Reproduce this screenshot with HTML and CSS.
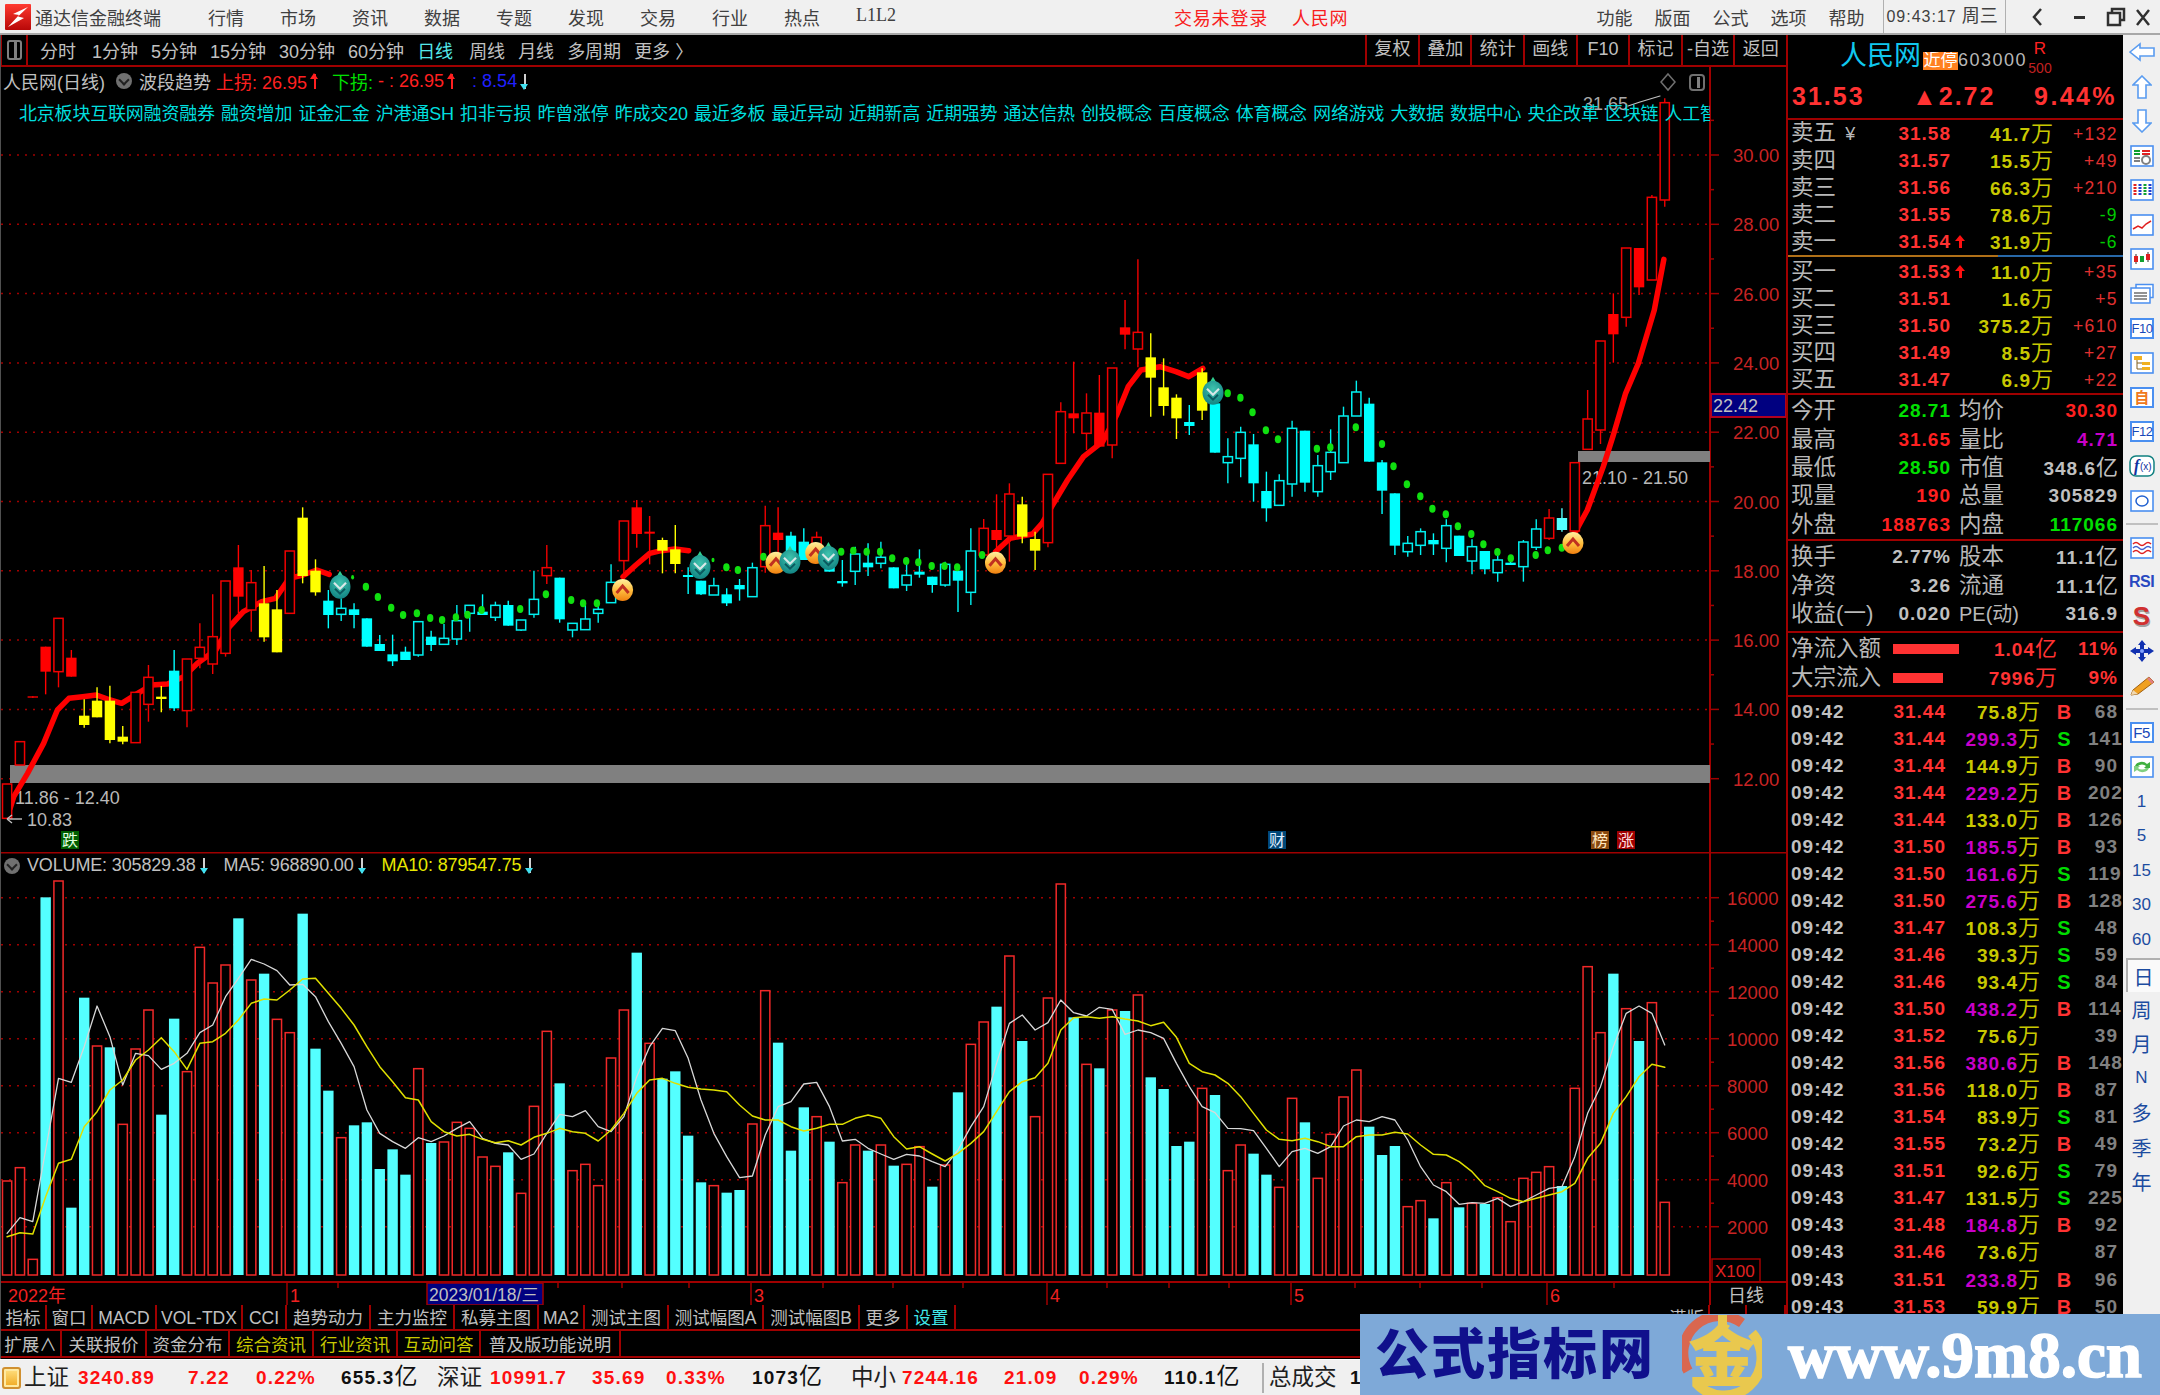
FILE: index.html
```html
<!DOCTYPE html>
<html lang="zh-CN">
<head>
<meta charset="utf-8">
<title>通达信金融终端</title>
<link rel="stylesheet" href="styles.css">
</head>
<body>
<header class="titlebar">
  <svg class="applogo" viewBox="0 0 26 26"><defs><linearGradient id="lg" x1="0" y1="0" x2="0" y2="1"><stop offset="0" stop-color="#ff3a30"/><stop offset="1" stop-color="#b80808"/></linearGradient></defs><rect width="26" height="26" rx="1" fill="url(#lg)"/><path d="M23 3 L8 10 L14 11 L3 23 L19 14 L13 12.5Z" fill="#fff"/></svg>
  <span class="appname">通达信金融终端</span>
  <nav class="menu"><span>行情</span><span>市场</span><span>资讯</span><span>数据</span><span>专题</span><span>发现</span><span>交易</span><span>行业</span><span>热点</span><span class="serif">L1L2</span></nav>
  <span class="alert">交易未登录</span><span class="alert second">人民网</span>
  <nav class="menu menu-right"><span>功能</span><span>版面</span><span>公式</span><span>选项</span><span>帮助</span></nav>
  <span class="clock"><b>09:43:17</b> 周三</span>
  <span class="winbtns"><svg viewBox="0 0 130 24"><path d="M17 4 L10 12 L17 20" fill="none" stroke="#303030" stroke-width="2.5"/><rect x="50" y="11" width="11" height="3" fill="#303030"/><rect x="84" y="8" width="12" height="12" fill="none" stroke="#303030" stroke-width="2.5"/><path d="M88 8V4H100V15H96" fill="none" stroke="#303030" stroke-width="2.5"/><path d="M126 5 L138 20 M138 5 L126 20" stroke="#303030" stroke-width="2.5" transform="translate(-13 0)"/></svg></span>
</header>

<div class="work">
  <main class="left">
    <div class="chart-toolbar">
      <span class="pane-btn"><i></i></span>
      <span class="tb tb-first">分时</span><span class="tb">1分钟</span><span class="tb">5分钟</span><span class="tb">15分钟</span><span class="tb">30分钟</span><span class="tb">60分钟</span><span class="tb tb-on">日线</span><span class="tb">周线</span><span class="tb">月线</span><span class="tb">多周期</span><span class="tb">更多 〉</span>
      <div class="tb-cells"><span>复权</span><span>叠加</span><span>统计</span><span>画线</span><span>F10</span><span>标记</span><span>-自选</span><span>返回</span></div>
    </div>

    <section class="chart-main">
      <svg id="main-chart" class="chart-svg" viewBox="0 67 1786 785" width="1786" height="785"></svg>
      <div class="legend">
        <span class="gray">人民网(日线)</span><span class="dot-btn"></span><span class="gray">波段趋势</span>
        <span class="red l-up">上拐: 26.95</span><span class="arrow-up"></span>
        <span class="green l-dn">下拐:</span><span class="red">&nbsp;- : 26.95</span><span class="arrow-up"></span>
        <span class="blue l-last">: 8.54</span><span class="arrow-dn"></span>
      </div>
      <div class="concepts"><span>北京板块互联网融资融券</span><span>融资增加</span><span>证金汇金</span><span>沪港通SH</span><span>扣非亏损</span><span>昨曾涨停</span><span>昨成交20</span><span>最近多板</span><span>最近异动</span><span>近期新高</span><span>近期强势</span><span>通达信热</span><span>创投概念</span><span>百度概念</span><span>体育概念</span><span>网络游戏</span><span>大数据</span><span>数据中心</span><span>央企改革</span><span>区块链</span><span>人工智能</span></div>
    </section>

    <section class="chart-vol">
      <svg id="vol-chart" class="chart-svg" viewBox="0 852 1786 453" width="1786" height="453"></svg>
      <div class="vol-legend">
        <span class="dot-btn"></span><span class="gray">VOLUME: 305829.38</span><span class="arrow-dn"></span>
        <span class="gray vl-gap">MA5: 968890.00</span><span class="arrow-dn"></span>
        <span class="yellow vl-gap">MA10: 879547.75</span><span class="arrow-dn"></span>
      </div>
    </section>

    <div class="tabs tabs-a">
      <span>指标</span><span>窗口</span><span>MACD</span><span>VOL-TDX</span><span>CCI</span><span>趋势动力</span><span>主力监控</span><span>私募主图</span><span>MA2</span><span>测试主图</span><span>测试幅图A</span><span>测试幅图B</span><span>更多</span><span class="cyan">设置</span><span class="filler"></span><span>满版</span><span></span><span></span>
    </div>
    <div class="tabs tabs-b">
      <span>扩展∧</span><span>关联报价</span><span>资金分布</span><span class="olive">综合资讯</span><span class="olive">行业资讯</span><span class="olive">互动问答</span><span>普及版功能说明</span><span class="filler"></span>
    </div>
  </main>

  <aside class="side">
    <div class="side-head">
      <div class="stock">
        <span class="stock-name">人民网</span><span class="stock-tag">近停</span><span class="stock-code">603000</span>
        <span class="stock-r"><b>R</b><small>500</small></span>
      </div>
      <div class="stock-price"><span>31.53</span><span>▲2.72</span><span class="pct">9.44%</span></div>
    </div>

    <div class="book">
      <div class="q"><span class="lb">卖五 <em>¥</em></span><span class="pr">31.58</span><span class="ar"></span><span class="vl">41.7<i>万</i></span><span class="dl">+132</span></div>
      <div class="q"><span class="lb">卖四</span><span class="pr">31.57</span><span class="ar"></span><span class="vl">15.5<i>万</i></span><span class="dl">+49</span></div>
      <div class="q"><span class="lb">卖三</span><span class="pr">31.56</span><span class="ar"></span><span class="vl">66.3<i>万</i></span><span class="dl">+210</span></div>
      <div class="q"><span class="lb">卖二</span><span class="pr">31.55</span><span class="ar"></span><span class="vl">78.6<i>万</i></span><span class="dl neg">-9</span></div>
      <div class="q"><span class="lb">卖一</span><span class="pr">31.54</span><span class="ar"><span class="tick-up"></span></span><span class="vl">31.9<i>万</i></span><span class="dl neg">-6</span></div>
    </div>
    <div class="two-tone"></div>
    <div class="book book-buy">
      <div class="q"><span class="lb">买一</span><span class="pr">31.53</span><span class="ar"><span class="tick-up"></span></span><span class="vl">11.0<i>万</i></span><span class="dl">+35</span></div>
      <div class="q"><span class="lb">买二</span><span class="pr">31.51</span><span class="ar"></span><span class="vl">1.6<i>万</i></span><span class="dl">+5</span></div>
      <div class="q"><span class="lb">买三</span><span class="pr">31.50</span><span class="ar"></span><span class="vl">375.2<i>万</i></span><span class="dl">+610</span></div>
      <div class="q"><span class="lb">买四</span><span class="pr">31.49</span><span class="ar"></span><span class="vl">8.5<i>万</i></span><span class="dl">+27</span></div>
      <div class="q"><span class="lb">买五</span><span class="pr">31.47</span><span class="ar"></span><span class="vl">6.9<i>万</i></span><span class="dl">+22</span></div>
    </div>

    <div class="info">
      <div class="r"><span class="lb">今开</span><span class="val green">28.71</span><span class="lb2">均价</span><span class="val red">30.30</span></div>
      <div class="r"><span class="lb">最高</span><span class="val red">31.65</span><span class="lb2">量比</span><span class="val magenta">4.71</span></div>
      <div class="r"><span class="lb">最低</span><span class="val green">28.50</span><span class="lb2">市值</span><span class="val gray">348.6<i>亿</i></span></div>
      <div class="r"><span class="lb">现量</span><span class="val red">190</span><span class="lb2">总量</span><span class="val gray">305829</span></div>
      <div class="r"><span class="lb">外盘</span><span class="val red">188763</span><span class="lb2">内盘</span><span class="val green">117066</span></div>
    </div>
    <div class="info info-b">
      <div class="r"><span class="lb">换手</span><span class="val gray">2.77%</span><span class="lb2">股本</span><span class="val gray">11.1<i>亿</i></span></div>
      <div class="r"><span class="lb">净资</span><span class="val gray">3.26</span><span class="lb2">流通</span><span class="val gray">11.1<i>亿</i></span></div>
      <div class="r"><span class="lb">收益(一)</span><span class="val gray">0.020</span><span class="lb2 pe">PE(动)</span><span class="val gray">316.9</span></div>
    </div>
    <div class="flows">
      <div class="f"><span class="lb">净流入额</span><span class="amt"><b class="bar bar-a"></b><span>1.04<i>亿</i></span></span><span class="fp">11%</span></div>
      <div class="f"><span class="lb">大宗流入</span><span class="amt"><b class="bar bar-b"></b><span>7996<i>万</i></span></span><span class="fp">9%</span></div>
    </div>

    <div class="ticks">
      <div class="t"><span class="tm">09:42</span><span class="tp">31.44</span><span class="tv">75.8<i>万</i></span><span class="ts buy">B</span><span class="tn">68</span></div>
      <div class="t"><span class="tm">09:42</span><span class="tp">31.44</span><span class="tv big">299.3<i>万</i></span><span class="ts sell">S</span><span class="tn">141</span></div>
      <div class="t"><span class="tm">09:42</span><span class="tp">31.44</span><span class="tv">144.9<i>万</i></span><span class="ts buy">B</span><span class="tn">90</span></div>
      <div class="t"><span class="tm">09:42</span><span class="tp">31.44</span><span class="tv big">229.2<i>万</i></span><span class="ts buy">B</span><span class="tn">202</span></div>
      <div class="t"><span class="tm">09:42</span><span class="tp">31.44</span><span class="tv">133.0<i>万</i></span><span class="ts buy">B</span><span class="tn">126</span></div>
      <div class="t"><span class="tm">09:42</span><span class="tp">31.50</span><span class="tv big">185.5<i>万</i></span><span class="ts buy">B</span><span class="tn">93</span></div>
      <div class="t"><span class="tm">09:42</span><span class="tp">31.50</span><span class="tv big">161.6<i>万</i></span><span class="ts sell">S</span><span class="tn">119</span></div>
      <div class="t"><span class="tm">09:42</span><span class="tp">31.50</span><span class="tv big">275.6<i>万</i></span><span class="ts buy">B</span><span class="tn">128</span></div>
      <div class="t"><span class="tm">09:42</span><span class="tp">31.47</span><span class="tv">108.3<i>万</i></span><span class="ts sell">S</span><span class="tn">48</span></div>
      <div class="t"><span class="tm">09:42</span><span class="tp">31.46</span><span class="tv">39.3<i>万</i></span><span class="ts sell">S</span><span class="tn">59</span></div>
      <div class="t"><span class="tm">09:42</span><span class="tp">31.46</span><span class="tv">93.4<i>万</i></span><span class="ts sell">S</span><span class="tn">84</span></div>
      <div class="t"><span class="tm">09:42</span><span class="tp">31.50</span><span class="tv big">438.2<i>万</i></span><span class="ts buy">B</span><span class="tn">114</span></div>
      <div class="t"><span class="tm">09:42</span><span class="tp">31.52</span><span class="tv">75.6<i>万</i></span><span class="ts"></span><span class="tn">39</span></div>
      <div class="t"><span class="tm">09:42</span><span class="tp">31.56</span><span class="tv big">380.6<i>万</i></span><span class="ts buy">B</span><span class="tn">148</span></div>
      <div class="t"><span class="tm">09:42</span><span class="tp">31.56</span><span class="tv">118.0<i>万</i></span><span class="ts buy">B</span><span class="tn">87</span></div>
      <div class="t"><span class="tm">09:42</span><span class="tp">31.54</span><span class="tv">83.9<i>万</i></span><span class="ts sell">S</span><span class="tn">81</span></div>
      <div class="t"><span class="tm">09:42</span><span class="tp">31.55</span><span class="tv">73.2<i>万</i></span><span class="ts buy">B</span><span class="tn">49</span></div>
      <div class="t"><span class="tm">09:43</span><span class="tp">31.51</span><span class="tv">92.6<i>万</i></span><span class="ts sell">S</span><span class="tn">79</span></div>
      <div class="t"><span class="tm">09:43</span><span class="tp">31.47</span><span class="tv">131.5<i>万</i></span><span class="ts sell">S</span><span class="tn">225</span></div>
      <div class="t"><span class="tm">09:43</span><span class="tp">31.48</span><span class="tv big">184.8<i>万</i></span><span class="ts buy">B</span><span class="tn">92</span></div>
      <div class="t"><span class="tm">09:43</span><span class="tp">31.46</span><span class="tv">73.6<i>万</i></span><span class="ts"></span><span class="tn">87</span></div>
      <div class="t"><span class="tm">09:43</span><span class="tp">31.51</span><span class="tv big">233.8<i>万</i></span><span class="ts buy">B</span><span class="tn">96</span></div>
      <div class="t"><span class="tm">09:43</span><span class="tp">31.53</span><span class="tv">59.9<i>万</i></span><span class="ts buy">B</span><span class="tn">50</span></div>
    </div>
  </aside>

  <aside class="strip">
    <span class="ti"><svg width="26" height="20" viewBox="0 0 26 20"><path d="M1 10 L11 2 V6 H25 V14 H11 V18Z" class="arrow-ico"/></svg></span>
    <span class="ti"><svg width="20" height="24" viewBox="0 0 20 24"><path d="M10 1 L19 10 H14 V23 H6 V10 H1Z" class="arrow-ico"/></svg></span>
    <span class="ti"><svg width="20" height="24" viewBox="0 0 20 24"><path d="M10 23 L19 14 H14 V1 H6 V14 H1Z" class="arrow-ico"/></svg></span>
    <span class="ti"><svg width="24" height="22" viewBox="0 0 24 22"><rect class="frame" x="1" y="1" width="22" height="20"/><path d="M4 6H10M4 9H10" stroke="#10a030" stroke-width="2"/><path d="M12 6H20M12 9H20" stroke="#e02020" stroke-width="2"/><path d="M4 13H10M4 16H10" stroke="#808080" stroke-width="2"/><circle cx="16" cy="15" r="4" fill="#fff" stroke="#808080" stroke-width="2"/></svg></span>
    <span class="ti"><svg width="24" height="22" viewBox="0 0 24 22"><rect class="frame" x="1" y="1" width="22" height="20"/><path d="M5 5V17" stroke="#e02020" stroke-width="3" stroke-dasharray="2 1"/><path d="M10 5V17" stroke="#2040d0" stroke-width="3" stroke-dasharray="2 1"/><path d="M15 5V17" stroke="#10a030" stroke-width="3" stroke-dasharray="2 1"/><path d="M20 5V17" stroke="#2040d0" stroke-width="3" stroke-dasharray="2 1"/></svg></span>
    <span class="ti"><svg width="24" height="22" viewBox="0 0 24 22"><rect class="frame" x="1" y="1" width="22" height="20"/><path d="M3 15 L8 12 L12 14 L16 10 L21 7" fill="none" stroke="#e02020" stroke-width="1.5"/></svg></span>
    <span class="ti"><svg width="24" height="22" viewBox="0 0 24 22"><rect class="frame" x="1" y="1" width="22" height="20"/><path d="M6 6V16M18 4V14" stroke="#303030"/><rect x="4" y="8" width="4" height="6" fill="#e02020"/><rect x="10" y="8" width="4" height="6" fill="#10a030"/><rect x="16" y="6" width="4" height="6" fill="#e02020"/></svg></span>
    <span class="ti"><svg width="24" height="22" viewBox="0 0 24 22"><rect x="6" y="1.5" width="17" height="13" fill="#fff" stroke="#4a8ff0" stroke-width="1.5"/><rect x="1" y="5" width="19" height="15" fill="#fff" stroke="#4a8ff0" stroke-width="1.5"/><path d="M4 10H17M4 13H17M4 16H17" stroke="#707070" stroke-width="1.5"/></svg></span>
    <span class="ti"><b class="fkey">F10</b></span>
    <span class="ti"><svg width="24" height="22" viewBox="0 0 24 22"><rect class="frame" x="1" y="1" width="22" height="20"/><rect x="4" y="4" width="8" height="4" fill="#f0b020"/><rect x="12" y="10" width="8" height="3" fill="#f0b020"/><rect x="12" y="15" width="8" height="3" fill="#f0b020"/><path d="M7 8V17H12M7 11H12" fill="none" stroke="#806020"/></svg></span>
    <span class="ti"><b class="fkey fkey-zi">自</b></span>
    <span class="ti"><b class="fkey">F12</b></span>
    <span class="ti"><svg width="26" height="22" viewBox="0 0 26 22"><rect x="1" y="1" width="24" height="20" rx="6" fill="#fff" stroke="#108080" stroke-width="1.5"/><text x="5" y="16" class="fx">f</text><text x="11" y="15" class="fx2">(x)</text></svg></span>
    <span class="ti"><svg width="24" height="22" viewBox="0 0 24 22"><rect class="frame" x="1" y="1" width="22" height="20"/><ellipse cx="12" cy="11" rx="6" ry="5" fill="none" stroke="#2060d0" stroke-width="1.5"/></svg></span>
    <span class="tsep"></span>
    <span class="ti"><svg width="24" height="22" viewBox="0 0 24 22"><rect class="frame" x="1" y="1" width="22" height="20"/><path d="M3 7 Q6 4 9 7 T15 7 T21 7" fill="none" stroke="#e02020" stroke-width="1.5"/><path d="M3 11 Q6 8 9 11 T15 11 T21 11" fill="none" stroke="#4060d0" stroke-width="1.5"/><path d="M3 15 Q6 12 9 15 T15 15 T21 15" fill="none" stroke="#e02020" stroke-width="1.5"/></svg></span>
    <span class="ti rsi">RSI</span>
    <span class="ti rsi-s">S</span>
    <span class="ti"><svg width="26" height="22" viewBox="0 0 26 22"><path d="M13 0 L17 5 H15 V9 H19 V7 L25 11 L19 15 V13 H15 V17 H17 L13 22 L9 17 H11 V13 H7 V15 L1 11 L7 7 V9 H11 V5 H9Z" fill="#1030b0"/><circle cx="13" cy="11" r="2" fill="#80a0ff"/></svg></span>
    <span class="ti"><svg width="28" height="24" viewBox="0 0 28 24"><path d="M3 21 L5 16 L21 3 L26 8 L10 20Z" fill="#f0a020" stroke="#a06010"/><path d="M3 21 L5 16 L10 20Z" fill="#f0d8b0"/><path d="M21 3 L26 8 L24 10 L19 5Z" fill="#e08080"/></svg></span>
    <span class="tsep"></span>
    <span class="ti"><b class="fkey fkey-f5">F5</b></span>
    <span class="ti"><svg width="24" height="22" viewBox="0 0 24 22"><rect class="frame" x="1" y="1" width="22" height="20"/><path d="M5 10 A7 6 0 0 1 17 8 L20 6 V12 H14 L16 10 A5 4 0 0 0 8 10Z" fill="#40b040"/><path d="M19 12 A7 6 0 0 1 7 14 L4 16 V10 H10 L8 12 A5 4 0 0 0 16 12Z" fill="#80d080"/></svg></span>
    <span class="ti tx">1</span><span class="ti tx">5</span><span class="ti tx">15</span><span class="ti tx">30</span><span class="ti tx">60</span>
    <span class="ti cn cn-on">日</span><span class="ti cn">周</span><span class="ti cn">月</span><span class="ti tx">N</span><span class="ti cn">多</span><span class="ti cn">季</span><span class="ti cn">年</span>
  </aside>
</div>

<footer class="status">
  <span class="st-ico"></span>
  <span class="nm">上证</span><span class="rd">3240.89</span><span class="rd">7.22</span><span class="rd">0.22%</span><span class="bk">655.3<i>亿</i></span>
  <span class="nm">深证</span><span class="rd">10991.7</span><span class="rd">35.69</span><span class="rd">0.33%</span><span class="bk">1073<i>亿</i></span>
  <span class="nm">中小</span><span class="rd">7244.16</span><span class="rd">21.09</span><span class="rd">0.29%</span><span class="bk">110.1<i>亿</i></span>
  <span class="nm nm-last">总成交</span><span class="bk bk-last">1272<i>亿</i></span>
</footer>

<div class="watermark">
  <span class="wm-title">公式指标网</span>
  <svg class="wm-logo" viewBox="0 0 80 80"><path d="M6 56 A37 37 0 0 1 60 8" fill="none" stroke="#d9674f" stroke-width="10"/><path d="M70 18 A37 37 0 0 1 14 68" fill="none" stroke="#e9c84e" stroke-width="10"/><rect x="36" y="0" width="9" height="14" fill="#e9c84e"/><text x="40" y="66" class="wm-glyph">金</text></svg>
  <span class="wm-url">www.9m8.cn</span>
</div>

<script src="chart.js"></script>
</body>
</html>
```
FILE: styles.css
```css
* { box-sizing: border-box; }
html, body { margin: 0; padding: 0; }
body {
  width: 2160px; height: 1395px; overflow: hidden; position: relative;
  background: #000; color: #c0c0c0;
  font-family: "Liberation Sans", "Noto Sans CJK SC", sans-serif; font-size: 18px;
}
i, em { font-style: normal; }

/* title bar */
.titlebar { height: 35px; display: flex; align-items: center; background: #f0f0f0; border-bottom: 2px solid #a8a8a8; color: #404040; }
.applogo { width: 26px; height: 26px; margin-left: 5px; flex: none; }
.appname { margin-left: 4px; width: 126px; white-space: nowrap; }
.menu { display: flex; gap: 36px; margin-left: 47px; }
.menu span { white-space: nowrap; }
.serif { font-family: "Liberation Serif", serif; margin-top: 1px; width: 36px; }
.alert { color: #f82020; margin-left: 282px; letter-spacing: .8px; white-space: nowrap; }
.alert.second { margin-left: 24px; }
.menu-right { margin-left: 248px; gap: 22px; }
.clock { margin-left: 19px; width: 123px; height: 33px; line-height: 32px; padding-left: 2px; border-left: 1px solid #b0b0b0; border-right: 1px solid #b0b0b0; font-size: 18px; white-space: nowrap; }
.clock b { font-weight: normal; font-size: 16px; letter-spacing: 1px; }
.winbtns { margin-left: 18px; }
.winbtns svg { width: 130px; height: 24px; display: block; }

.work { display: flex; height: 1324px; }
.left { width: 1786px; flex: none; display: flex; flex-direction: column; border-left: 1px solid #505050; margin-left: 0; }

/* chart toolbar */
.chart-toolbar { height: 32px; flex: none; display: flex; align-items: center; border-bottom: 2px solid #a00000; white-space: nowrap; }
.pane-btn { width: 27px; height: 30px; border-right: 2px solid #a00000; border-left: 1px solid #a00000; display: flex; align-items: center; justify-content: center; }
.pane-btn i { width: 15px; height: 20px; border: 2px solid #808080; border-radius: 3px; background: linear-gradient(to right, #000 0 5px, #808080 5px 8px, #000 8px); }
.tb { margin-right: 13px; }
.tb-first { margin-left: 12px; margin-right: 16px; }
.tb-on { color: #54e8e8; margin-right: 16px; }
.tb-cells { margin-left: auto; display: flex; height: 30px; }
.tb-cells span { width: 52.6px; border-left: 2px solid #a00000; text-align: center; line-height: 29px; }

/* charts */
.chart-main { height: 785px; flex: none; position: relative; overflow: hidden; }
.chart-vol { height: 453px; flex: none; position: relative; overflow: hidden; }
.chart-svg { position: absolute; left: -1px; top: 0; display: block; }
.chart-svg text { font-family: "Liberation Sans", "Noto Sans CJK SC", sans-serif; }
.legend { position: relative; display: flex; align-items: center; height: 20px; margin-top: 4px; margin-left: 2px; white-space: nowrap; }
.gray { color: #c0c0c0; }
.red { color: #ff2020; }
.green { color: #00e000; }
.blue { color: #2020ff; }
.yellow { color: #e8e800; }
.magenta { color: #c800c8; }
.cyan { color: #40e8e8; }
.olive { color: #c8c800; }
.dot-btn { width: 16px; height: 16px; flex: none; border-radius: 50%; background: #707070; margin: 0 7px 0 11px; position: relative; }
.dot-btn::after { content: ""; position: absolute; left: 4px; top: 3px; width: 6px; height: 6px; border-right: 2px solid #222; border-bottom: 2px solid #222; transform: rotate(45deg); }
.l-up { margin-left: 5px; }
.l-dn { margin-left: 13px; }
.l-last { margin-left: 16px; }
.arrow-up, .arrow-dn { display: inline-block; width: 9px; height: 17px; margin-left: 3px; flex: none; position: relative; }
.arrow-up::before, .arrow-dn::before { content: ""; position: absolute; left: 3.5px; width: 2px; top: 1px; bottom: 1px; background: #ff2020; }
.arrow-up::after, .arrow-dn::after { content: ""; position: absolute; left: 0; width: 0; height: 0; border-left: 4.5px solid transparent; border-right: 4.5px solid transparent; }
.arrow-up::after { top: 0; border-bottom: 6px solid #ff2020; }
.arrow-dn::before { background: #d0d0d0; }
.arrow-dn::after { bottom: 0; border-top: 6px solid #40e0f0; }
.concepts { position: relative; display: flex; gap: 6.2px; width: 1709px; overflow: hidden; padding-left: 18px; margin-top: 12px; height: 22px; line-height: 22px; color: #00dede; white-space: nowrap; letter-spacing: -.2px; }
.concepts span { flex: none; }
.vol-legend { position: relative; display: flex; align-items: center; height: 24px; white-space: nowrap; letter-spacing: -.15px; padding-top: 3px; }
.vol-legend .dot-btn { margin: 0 7px 0 3px; }
.vl-gap { margin-left: 15px; }
.vol-legend .arrow-dn { margin-left: 4px; }

/* bottom tabs */
.tabs { display: grid; flex: none; border-bottom: 2px solid #a00000; white-space: nowrap; }
.tabs > span { border-right: 2px solid #a00000; text-align: center; overflow: hidden; }
.tabs-a { height: 26px; line-height: 27px; grid-template-columns: 46px 46px 64px 86px 44px 84px 84px 84px 46px 84px 95px 96px 48px 48px 709px 45px 37px 39px; font-size: 17.5px; }
.tabs-b { height: 27px; line-height: 29px; grid-template-columns: 61px 85px 83px 84px 84px 83px 140px 1fr; font-size: 17.5px; }
.tabs > .filler { border-right: 0; }

/* quote panel */
.side { width: 337px; flex: none; border-left: 2px solid #a00000; overflow: hidden; }
.side-head { height: 85px; border-bottom: 2px solid #a00000; padding-top: 7px; }
.stock { display: flex; height: 28px; margin-left: 52px; white-space: nowrap; }
.stock-name { color: #10c8ee; font-size: 27px; line-height: 28px; width: 83px; }
.stock-tag { background: #ff8020; color: #fff; width: 35px; height: 18px; margin-top: 10px; font-size: 17px; line-height: 18px; text-align: center; overflow: hidden; }
.stock-code { color: #b8b8b8; font-size: 18px; letter-spacing: 1.5px; margin-top: 9px; line-height: 18px; width: 74px; }
.stock-r { display: flex; flex-direction: column; align-items: center; color: #ff2020; font-size: 17px; line-height: 14px; width: 16px; }
.stock-r b { font-weight: normal; }
.stock-r small { color: #c02020; font-size: 14px; margin-top: 5px; }
.stock-price { display: grid; grid-template-columns: 120px 1fr auto; margin: 14px 6px 0 4px; font-weight: bold; font-size: 25px; line-height: 25px; letter-spacing: 2px; color: #ff3232; white-space: nowrap; }
.stock-price .pct { letter-spacing: 2.4px; }

.lb { font-size: 22.5px; line-height: 24px; white-space: nowrap; color: #b8b8b8; }
.lb em { font-size: 18px; margin-left: 3px; }
.q, .r, .f, .t { display: grid; align-items: center; padding: 0 5px 0 3px; white-space: nowrap; font-weight: bold; font-size: 19px; line-height: 20px; letter-spacing: 1px; }
.q .lb, .r .lb, .f .lb, .r .lb2 { font-weight: normal; letter-spacing: 0; }
.book { height: 135px; }
.q { height: 27px; grid-template-columns: 89px 71px 18px 84px 65px; }
.book-buy { height: 138px; border-bottom: 2px solid #a00000; padding-top: 1px; }
.pr { color: #ff3232; text-align: right; }
.ar { display: flex; justify-content: center; }
.tick-up { width: 11px; height: 13px; position: relative; display: block; }
.tick-up::before { content: ""; position: absolute; left: 4px; top: 4px; bottom: 0; width: 3px; background: #ff1010; }
.tick-up::after { content: ""; position: absolute; left: 0; top: 0; border-left: 5.5px solid transparent; border-right: 5.5px solid transparent; border-bottom: 6px solid #ff1010; }
.vl { color: #c8c800; text-align: right; }
.vl i, .tv i { font-weight: normal; font-size: 22px; line-height: 1; letter-spacing: 0; color: #c8c800; }
.dl { color: #e03030; text-align: right; font-weight: normal; font-size: 17.5px; letter-spacing: 1.4px; }
.dl.neg { color: #00c800; }
.two-tone { height: 2px; background: linear-gradient(to right, #b07018 0 210px, #2868a8 210px); }

.info { height: 146px; border-bottom: 2px solid #a00000; padding-top: 2px; }
.r { height: 28.4px; grid-template-columns: 89px 71px 64px 103px; }
.r .val { text-align: right; }
.r .val i, .amt i { font-weight: normal; font-size: 22px; line-height: 1; letter-spacing: 0; }
.lb2 { font-size: 22.5px; line-height: 24px; padding-left: 8px; color: #b8b8b8; }
.lb2.pe { font-size: 20px; }
.info-b { height: 92px; }
.flows { height: 64px; border-bottom: 2px solid #a00000; padding-top: 2px; }
.f { height: 28.5px; grid-template-columns: 102px 164px 61px; color: #ff3232; }
.amt { display: flex; align-items: center; justify-content: space-between; }
.bar { display: block; height: 10px; background: #ff3232; }
.bar-a { width: 66px; }
.bar-b { width: 50px; }
.fp { text-align: right; }

.ticks { padding-top: 1px; }
.t { height: 27.05px; grid-template-columns: 155px 94px 48px 30px; position: relative; }
.t .tm { grid-column: 1; grid-row: 1; color: #c0c0c0; }
.t .tp { grid-column: 1; grid-row: 1; color: #ff3232; text-align: right; }
.tv { color: #c8c800; text-align: right; }
.tv.big { color: #c800c8; }
.ts { text-align: center; font-size: 20px; letter-spacing: 0; }
.ts.buy { color: #ff3232; }
.ts.sell { color: #00dc00; }
.tn { text-align: right; color: #808080; }

/* tool strip */
.strip { flex: 1; background: #f0f0f0; display: flex; flex-direction: column; align-items: center; overflow: hidden; }
.ti { height: 34.5px; flex: none; display: flex; align-items: center; justify-content: center; width: 100%; }
.tsep { width: 32px; height: 12.5px; flex: none; position: relative; }
.tsep::after { content: ""; position: absolute; left: 0; right: 0; top: 5px; height: 2px; background: #c0c0c0; }
.arrow-ico { fill: #fff; stroke: #5a9cf0; stroke-width: 1.6; }
.frame { fill: #fff; stroke: #4a8ff0; stroke-width: 1.6; }
.fkey { display: block; width: 24px; height: 21px; border: 2px solid #4a8ff0; background: #fff; color: #1848b8; font-size: 13px; line-height: 17px; text-align: center; font-weight: normal; letter-spacing: -.5px; white-space: nowrap; }
.fkey-zi { color: #f07820; font-size: 15px; font-weight: bold; }
.fkey-f5 { font-size: 15px; }
.fx { font: italic bold 16px "Liberation Serif", serif; fill: #1030a0; }
.fx2 { font: 10px "Liberation Sans", sans-serif; fill: #1030a0; }
.rsi { color: #2848c0; font-weight: bold; font-size: 16px; letter-spacing: -.5px; }
.rsi-s { color: #d03030; font-weight: bold; font-size: 26px; text-shadow: 1px 2px 0 #a0a0a0; }
.tx { color: #1c4ca0; font-size: 17px; }
.cn { color: #1c4ca0; font-size: 20px; }
.cn-on { width: 34px; height: 34px; background: #fafafa; border-top: 2px solid #b0b0b0; border-left: 2px solid #b0b0b0; margin-left: 2px; margin-top: 1px; }

/* status bar */
.status { height: 36px; display: grid; grid-template-columns: 24px 54px 110px 68px 85px 96px 53px 102px 74px 86px 99px 51px 102px 75px 85px 98px 88px 100px; align-items: center; background: #f0f0f0; border-top: 1px solid #fff; white-space: nowrap; font-weight: bold; font-size: 19px; line-height: 24px; letter-spacing: 1.2px; }
.st-ico { width: 19px; height: 22px; margin-left: 2px; background: linear-gradient(#ffe080, #f0a820); border: 2px solid #d09030; border-radius: 3px; box-shadow: inset 0 0 0 2px #ffe9a0; }
.nm { color: #202020; font-weight: normal; font-size: 22.5px; letter-spacing: 0; }
.rd { color: #ff1010; }
.bk { color: #101010; }
.bk i { font-weight: normal; font-size: 23px; line-height: 1; letter-spacing: 0; }
.nm-last { border-left: 2px solid #b0b0b0; padding-left: 5px; height: 30px; line-height: 30px; }
.bk-last { margin-left: 0; }

/* site watermark over the bottom right corner */
.watermark { position: absolute; left: 1360px; top: 1314px; right: 0; bottom: 0; background: #7ea9d8; display: flex; align-items: center; }
.wm-title { margin-left: 15px; width: 305px; font-size: 54px; line-height: 60px; font-weight: 900; letter-spacing: 2px; color: #10108c; white-space: nowrap; }
.wm-logo { width: 80px; height: 80px; flex: none; margin-left: 2px; }
.wm-glyph { font-size: 68px; font-weight: 900; fill: #e9c84e; text-anchor: middle; font-family: "Noto Sans CJK SC", sans-serif; }
.wm-url { margin-left: 26px; font-family: "Liberation Serif", serif; font-weight: bold; font-size: 65px; line-height: 66px; color: #fff; -webkit-text-stroke: 1.6px #fff; white-space: nowrap; }
```
FILE: chart.js
```js
// Daily candle and volume data, given in screen pixels of the price and volume scales.
const X = i => 7.1 + 12.85 * i;
const priceY = p => 155 + (30 - p) * 34.65;
const AXIS = 1710;
const DARK = '#a00000';

const seg = (off, rows) => rows.map(r => ({ t: r[0], top: off + r[1] / 3, bot: off + r[2] / 3, hi: r[3] ? off + r[3] / 3 : 0, lo: r[4] ? off + r[4] / 3 : 0 }));

const candles = [
  ...seg(480, [
    ['r',912,1015],['r',785,855],['R',649,653],['R',500,575,0,643],['r',415,575,0,622],['R',533,590,510,0],
    ['y',707,735,658,743],['y',662,712,622,0],['y',662,780,617,790],['y',770,785,738,793],['r',637,788],
    ['r',592,673,555,725],['y',650,657,618,697],['C',572,685,510,693],['r',537,692,0,742],['r',502,535,430,565],
    ['r',470,552,343,582],['r',303,520,0,530],['R',262,350,195,400],['r',308,390,270,455],['y',370,472,258,485],
    ['y',388,517,330,0],['r',213,400],['y',113,288,82,310],['y',272,337,238,347],['C',362,405,330,445],
    ['c',385,403,355,423],['C',388,405,370,445],['C',415,500],['C',492,513,465,0],['C',523,544,464,558],
    ['C',515,540,500,0],['c',425,525,0,530],['C',470,495,452,513],['c',475,493,432,0],['c',422,477,375,495],
    ['c',376,400,0,455],['C',395,405,343,0],['c',376,412,365,423],['C',375,437,362,0],['c',420,450,0,453],
    ['c',358,403,272,413],['r',263,287,195,312],['C',293,418,0,428],['c',430,450,0,472],['c',417,449,372,0],
    ['c',388,400,365,428],['c',307,368,253,0],['r',123,242,0,300],['R',82,162,60,203],['R',155,161,108,253],
    ['y',180,212,173,280],['y',208,252,135,280],['C',285,291,262,342],['C',302,343,0,345],['c',317,345,293,0]
  ]),
  ...seg(230, [
    ['C',1093,1120,1075,1128],['C',1065,1078,1047,1112],['c',1013,1100,998,0],['r',887,1010,827,1028],
    ['R',908,930,832,1000],['C',917,965,905,1000],['C',935,990,895,0],['r',922,945,905,0],['C',1000,1025],
    ['C',1053,1060,990,1070],['c',972,1024,950,1065],['C',998,1012,940,1038],['c',982,1000,935,1015],
    ['C',1012,1075],['c',1036,1065,985,1083],['C',1025,1034,958,1043],['C',1040,1065,0,1088],['c',1003,1065,995,1070],
    ['C',1022,1052,1005,1146],['c',963,1087,895,1125],['r',895,975,867,0],['R',900,930,793,990],
    ['r',792,918,760,995],['y',823,920,800,940],['y',927,962,905,1020],['r',733,938,0,952],['r',545,700,517,0],
    ['R',550,565,395,610],['r',549,610,490,660],['R',548,650,435,0],['r',414,645,0,685],['R',292,314,210,358],
    ['r',307,357,88,412],['y',382,443,310,560],['y',472,528,385,557],['y',503,565,493,627],['C',576,588,525,615],
    ['y',427,542,415,570],['C',520,668,465,0],['c',680,698,625,760],['c',607,685,590,742],['C',643,760,612,815],
    ['C',783,835,725,875],['c',752,826,733,0],['c',595,762,572,800],['C',602,758,0,785],['c',707,785,675,800],
    ['c',667,725,598,750],['c',558,698,530,0],['c',486,558,452,0],['C',521,695,503,0],['C',697,782,690,852],
    ['C',790,947,0,975],['c',940,965,918,980],['c',905,946,895,975],['C',930,943,910,975],['c',887,955,868,997],
    ['C',917,978],['c',950,993,928,1033],['C',963,1018,0,1033],['c',990,1028,960,1055],['C',998,1005,975,0],
    ['c',936,1010,930,1055],['c',897,952,868,960],['r',864,925,837,930],['L',864,900,835,905]
  ]),
  ...seg(80, [
    ['r',1148,1353],['r',1017,1108,930,0],['r',783,1050,0,1092],['R',702,763,640,848],['r',504,712,0,740],
    ['R',504,622,0,645],['r',352,600,345,0],['r',68,360,55,380]
  ])
];

const COLORS = { r: ['#f00000', 0], R: ['#ff0000', 1], y: ['#ffff00', 1], C: ['#00ffff', 1], c: ['#00f0f0', 0], L: ['#54ffff', 1] };

let defs = `<defs>
<radialGradient id="tealBall" cx=".5" cy=".35" r=".7"><stop offset="0" stop-color="#3fc4ae"/><stop offset="1" stop-color="#0f7f80"/></radialGradient>
<linearGradient id="goldBall" x1="0" y1="0" x2="0" y2="1"><stop offset="0" stop-color="#fff0a0"/><stop offset=".5" stop-color="#ffc040"/><stop offset="1" stop-color="#f08010"/></linearGradient>
</defs>`;

const text = (x, y, s, fill, size = 18, extra = '') => `<text x="${x}" y="${y}" fill="${fill}" font-size="${size}" ${extra}>${s}</text>`;
const line = (x1, y1, x2, y2, stroke, w = 2, extra = '') => `<line x1="${x1}" y1="${y1}" x2="${x2}" y2="${y2}" stroke="${stroke}" stroke-width="${w}" ${extra}/>`;
const rect = (x, y, w, h, fill, extra = '') => `<rect x="${x}" y="${y}" width="${w}" height="${h}" fill="${fill}" ${extra}/>`;
const poly = (pts, stroke, w) => `<polyline points="${pts.map(p => p.join(',')).join(' ')}" fill="none" stroke="${stroke}" stroke-width="${w}" stroke-linejoin="round" stroke-linecap="round"/>`;

/* ---------- price chart ---------- */
let m = defs;
for (let p = 30; p >= 12; p -= 2) {
  m += line(1, priceY(p), AXIS, priceY(p), '#a00000', 1.5, 'stroke-dasharray="2 6"');
}
for (let p = 31; p >= 12; p -= 1) {
  const y = priceY(p);
  m += line(AXIS, y, AXIS + (p % 2 ? 4 : 9), y, DARK, 1.5);
  if (!(p % 2)) m += text(1733, y + 7, p + '.00', '#c82424', 18.5);
}
m += line(AXIS, 67, AXIS, 852, DARK, 2);

// support and resistance zones
m += rect(10, 765, AXIS - 10, 18, '#808080');
m += rect(1578, 451, AXIS - 1578, 11, '#808080');
m += text(15, 804, '11.86 - 12.40', '#b8b8b8', 18);
m += text(1582, 484, '21.10 - 21.50', '#b8b8b8', 18);

// trend line
const zA = (x, y) => [x / 2.178, 480 + y / 3];
const zB = (x, y) => [720 + x / 1.568, 230 + y / 3];
const trendA = [[22,985],[30,950],[60,880],[95,790],[125,690],[150,655],[180,650],[210,645],[240,660],[265,670],[300,640],[330,615],[365,612],[400,590],[430,550],[470,510],[500,440],[530,395],[570,365],[600,355],[630,295],[660,285],[690,270],[717,283]];
const trendB = [[1357,290],[1385,255],[1415,220],[1440,212],[1470,207],[1500,212]];
const trendC = [[432,965],[455,925],[490,912],[505,880],[520,830],[545,750],[570,680],[600,635],[622,555],[640,470],[660,420],[690,410],[715,425],[735,440],[757,415]];
const trendD = [[1340,910],[1360,840],[1385,710],[1400,620],[1420,490],[1440,400],[1465,240],[1480,88]];
m += poly(trendA.map(p => zA(...p)), '#ff0000', 5.5);
m += poly(trendB.map(p => zA(...p)), '#ff0000', 5.5);
m += poly(trendC.map(p => zB(...p)), '#ff0000', 5.5);
m += poly(trendD.map(p => zB(...p)), '#ff0000', 5.5);

// candles
candles.forEach((c, i) => {
  const x = X(i), [col, solid] = COLORS[c.t];
  const hi = c.hi || c.top, lo = c.lo || c.bot;
  m += line(x, hi, x, lo, col, 1.4);
  const h = c.bot - c.top;
  if (solid) m += rect(x - 5.2, c.top, 10.4, h, col);
  else m += rect(x - 4.6, c.top, 9.2, h, '#000', `stroke="${col}" stroke-width="1.5"`);
});

// green trailing dots
const dotsA = [[768,292,1.5],[797,320],[823,351],[852,383],[878,405],[908,400],[937,414],[963,420],[993,412],[1018,404],[1049,390],[1133,387],[1189,343],[1244,360],[1270,370],[1300,370],[1553,240,1.5]];
const dotsB = [[10,1012],[28,1020],[68,980],[190,965],[209,962],[230,965],[251,965],[270,985],[292,993],[311,997],[332,1008],[352,1008],[372,1012],[411,975],[796,490],[816,503],[835,547],[856,601],[875,628],[936,656],[957,652],[997,592],[1038,642],[1056,709],[1077,763],[1098,799],[1117,836],[1138,853],[1157,889],[1178,912],[1197,943],[1219,966],[1240,985],[1279,975],[1298,961],[1320,953]];
const dot = (p, r) => `<ellipse cx="${p[0].toFixed(1)}" cy="${p[1].toFixed(1)}" rx="${r}" ry="${r + .8}" fill="#10e010"/>`;
dotsA.forEach(d => m += dot(zA(d[0], d[1]), d[2] || 3.2));
dotsB.forEach(d => m += dot(zB(d[0], d[1]), 3.2));

// signal balls
const gold = (x, y) => `<g transform="translate(${x} ${y})"><ellipse rx="10.5" ry="11" fill="url(#goldBall)"/><path d="M-6 3 L0 -4 L6 3" fill="none" stroke="#c03020" stroke-width="3"/></g>`;
const teal = (x, y) => `<g transform="translate(${x} ${y})"><path d="M-4 -9 L0 -16 L4 -9Z" fill="#30d090"/><ellipse rx="10.5" ry="12" fill="url(#tealBall)"/><path d="M-6 -4 L0 2 L6 -4" fill="none" stroke="#d8e8e8" stroke-width="2.2"/><path d="M-5 2 L0 7 L5 2" fill="none" stroke="#0a5a60" stroke-width="2"/></g>`;
[[622.6,590],[776,562.7],[815.7,553],[995.5,562.7],[1573,543]].forEach(p => m += gold(...p));
[[340,586.7],[700,567],[790,561.7],[828.4,558],[1213,392.7]].forEach(p => m += teal(...p));

// price tags and markers
m += text(1583, 110, '31.65', '#a8a8a8', 18);
m += poly([[1628,106],[1640,102],[1660,96]], '#c0c0c0', 1.2);
m += line(7, 819, 22, 819, '#c0c0c0', 1.4) + `<path d="M7 819 L12 815 M7 819 L12 823" stroke="#c0c0c0" stroke-width="1.4"/>`;
m += text(27, 826, '10.83', '#b8b8b8', 18);
const marker = (x, label, bg, fg) => rect(x, 831, 18, 18, bg) + text(x + 9, 846, label, fg, 16, 'text-anchor="middle"');
m += marker(61, '跌', '#005e00', '#e0ffe0');
m += marker(1268, '财', '#004878', '#e0f0ff');
m += marker(1591, '榜', '#8a4a10', '#ffe8c0');
m += marker(1617, '涨', '#a00000', '#ffe0e0');

m += `<path d="M1668 74 L1675 82 L1668 90 L1661 82Z" fill="none" stroke="#707070" stroke-width="1.5"/>`;
m += rect(1690, 75, 14, 15, '#000', 'stroke="#707070" stroke-width="2" rx="3"') + rect(1697, 77, 3, 11, '#808080');
// last-price tag on the axis
m += rect(1711, 394, 75, 23, '#000080', `stroke="#b00020" stroke-width="2"`);
m += text(1713, 412, '22.42', '#c0c0c0', 18);

document.getElementById('main-chart').innerHTML = m;

/* ---------- volume chart ---------- */
const VOL = ('r993 r953 r1228 C142 r93 C1073 C443 r588 C592 r823 r597 r480 C794 C506 r665 r292 r399 r345 C205 r390 C371 r508 r548 C191 C596 C722 r863 C826 C817 C957 C898 C974 r656 C879 r876 r817 r835 r921 r949 C907 r1030 r769 r544 C700 r962 r943 r1007 r624 r480 C308 r580 C686 C664 C857 C997 r1007 C1028 C1020 r822 r422 C578 C902 C772 r800 C875 r998 r885 ' +
  'C902 r885 C947 r943 r890 C1010 r945 C727 r583 r516 C470 r318 C573 r800 r444 r102 C502 r643 C655 r480 C483 r435 C682 C717 C888 C875 r715 C735 r962 r885 C911 C974 r1012 r745 C817 r985 r853 r741 r660 C830 C915 C888 r1070 r1052 C1105 r998 C1072 r1060 C1062 r1043 r1115 r985 r967 r950 C1008 r715 r350 r548 C371 r476 C573 r458 r1057').split(' ');
const MA5 = [1150,1103,1115,900,685,697,590,468,560,705,610,617,658,640,610,548,525,440,385,328,342,362,405,403,440,515,580,650,780,850,875,895,863,875,858,835,815,865,880,885,928,912,850,793,800,782,830,845,800,680,590,535,542,625,750,850,920,983,978,855,770,755,702,697,770,873,868,
  895,912,928,913,918,935,950,900,830,770,640,520,495,540,518,450,488,498,472,478,553,540,548,565,640,710,770,788,835,836,842,895,950,905,895,910,890,828,810,815,800,810,870,950,1005,1025,1063,1058,1060,1045,1070,1055,1035,1015,1010,920,790,710,590,490,468,490,585];
const MA10 = [1160,1148,1152,1040,940,928,830,785,720,690,630,600,563,605,658,580,575,550,510,460,447,450,420,387,385,430,475,525,590,650,695,743,750,815,845,858,853,868,878,872,885,862,850,835,845,850,873,840,790,730,690,685,700,712,717,720,725,765,798,810,810,830,843,835,823,823,805,
  795,805,860,897,890,912,933,910,880,845,785,725,695,683,640,540,503,500,505,500,507,513,527,517,562,640,665,675,700,740,790,840,868,872,865,875,890,890,860,855,855,847,852,885,913,915,935,965,1007,1025,1045,1055,1045,1035,1025,1000,925,880,790,740,680,643,652];
const volY = z => 850 + z / 3;
const BASE = 1275;

let v = '';
const volTickY = n => 897.7 + (16000 - n) * 47 / 2000;
for (let n = 16000; n >= 2000; n -= 2000) {
  const y = volTickY(n);
  v += line(1, y, AXIS, y, '#a00000', 1.5, 'stroke-dasharray="2 6"');
  v += line(AXIS, y, AXIS + 9, y, DARK, 1.5);
  v += text(1727, y + 7, n, '#c82424', 18.5);
}
for (let n = 15000; n > 1000; n -= 2000) v += line(AXIS, volTickY(n), AXIS + 4, volTickY(n), DARK, 1.5);

VOL.forEach((b, i) => {
  const x = X(i), top = volY(+b.slice(1));
  if (b[0] === 'C') v += rect(x - 5.2, top, 10.4, BASE - top, '#54ffff');
  else v += rect(x - 4.6, top, 9.2, BASE - top, '#000', 'stroke="#f02828" stroke-width="1.5"');
});
v += poly(MA5.map((z, i) => [X(i), volY(z)]), '#d8d8d8', 1.3);
v += poly(MA10.map((z, i) => [X(i), volY(z)]), '#e0e000', 1.5);

// frame
v += line(0, 852.5, 1786, 852.5, DARK, 2);
v += line(AXIS, 852, AXIS, 1305, DARK, 2);
v += rect(1712, 1259, 48, 23, 'none', `stroke="${DARK}" stroke-width="1.5"`);
v += text(1715, 1277, 'X100', '#e02020', 17);
v += line(0, 1282, 1786, 1282, DARK, 2);

// date axis
v += text(8, 1302, '2022年', '#f02020', 18);
[338,558,622,689,823,893,963,1107,1169,1229,1355,1420,1482,1614].forEach(x => v += line(x, 1283, x, 1288, DARK, 1.5));
[[287,'1'],[751,'3'],[1047,'4'],[1291,'5'],[1547,'6']].forEach(([x, s]) => {
  v += line(x, 1283, x, 1305, DARK, 1.5) + text(x + 3, 1302, s, '#f02020', 18);
});
v += rect(427, 1283, 116, 22, '#000080', `stroke="${DARK}" stroke-width="1.5"`);
v += text(429, 1301, '2023/01/18/三', '#c0c0c0', 17.5);
v += text(1728, 1302, '日线', '#c0c0c0', 18);
document.getElementById('vol-chart').innerHTML = v;
```
